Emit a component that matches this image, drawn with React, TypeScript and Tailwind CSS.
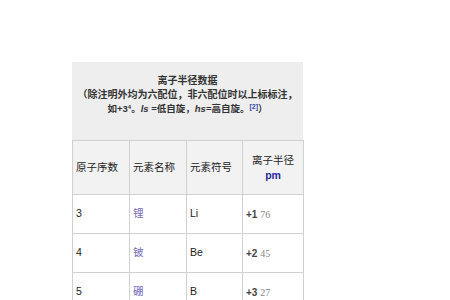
export default function App() {
  const font = { fontFamily: '"Liberation Sans", "Noto Sans CJK SC", sans-serif' };
  const rows = [
    { n: "3", name: "锂", sym: "Li", ch: "+1", r: "76" },
    { n: "4", name: "铍", sym: "Be", ch: "+2", r: "45" },
    { n: "5", name: "硼", sym: "B", ch: "+3", r: "27" },
  ];
  return (
    <div className="w-[450px] h-[300px] bg-white overflow-hidden pt-[62px] pl-[72px]" style={font}>
      <div className="w-[231px]">
        <div className="bg-[#eeeeee] h-[78px] pt-[12px] text-center text-[10px] leading-[14px] font-bold text-[#333]">
          <div>离子半径数据</div>
          <div>（除注明外均为六配位，非六配位时以上标标注，</div>
          <div className="text-[9.5px]">
            如+3<sup className="text-[6px]">4</sup>。<i>ls</i> =低自旋，<i>hs</i>=高自旋。
            <sup className="text-[7px] text-[#3345aa]">[2]</sup>）
          </div>
        </div>
        <table className="border-collapse w-[231px] text-[10.5px] text-[#222] table-fixed">
          <colgroup>
            <col className="w-[57px]" />
            <col className="w-[57px]" />
            <col className="w-[56px]" />
            <col className="w-[61px]" />
          </colgroup>
          <thead>
            <tr className="h-[54px] bg-[#f2f2f2]">
              <th className="border border-[#d0d0d0] text-left font-normal pl-[3px] text-[#222]">原子序数</th>
              <th className="border border-[#d0d0d0] text-left font-normal pl-[3px] text-[#222]">元素名称</th>
              <th className="border border-[#d0d0d0] text-left font-normal pl-[3px] text-[#222]">元素符号</th>
              <th className="border border-[#d0d0d0] font-normal text-center leading-[15px] text-[#222]">
                <div>离子半径</div>
                <div className="font-bold text-[#1f2a9a]">pm</div>
              </th>
            </tr>
          </thead>
          <tbody>
            {rows.map((r) => (
              <tr key={r.n} className="h-[39px] bg-white">
                <td className="border border-[#d0d0d0] pl-[3px]">{r.n}</td>
                <td className="border border-[#d0d0d0] pl-[3px] text-[#7468b8]">{r.name}</td>
                <td className="border border-[#d0d0d0] pl-[3px]">{r.sym}</td>
                <td className="border border-[#d0d0d0] pl-[3px] text-[10px]">
                  <span className="font-bold text-[#444]">{r.ch}</span>{" "}
                  <span className="text-[#888]" style={{ fontFamily: '"Liberation Serif", serif' }}>{r.r}</span>
                </td>
              </tr>
            ))}
          </tbody>
        </table>
      </div>
    </div>
  );
}
